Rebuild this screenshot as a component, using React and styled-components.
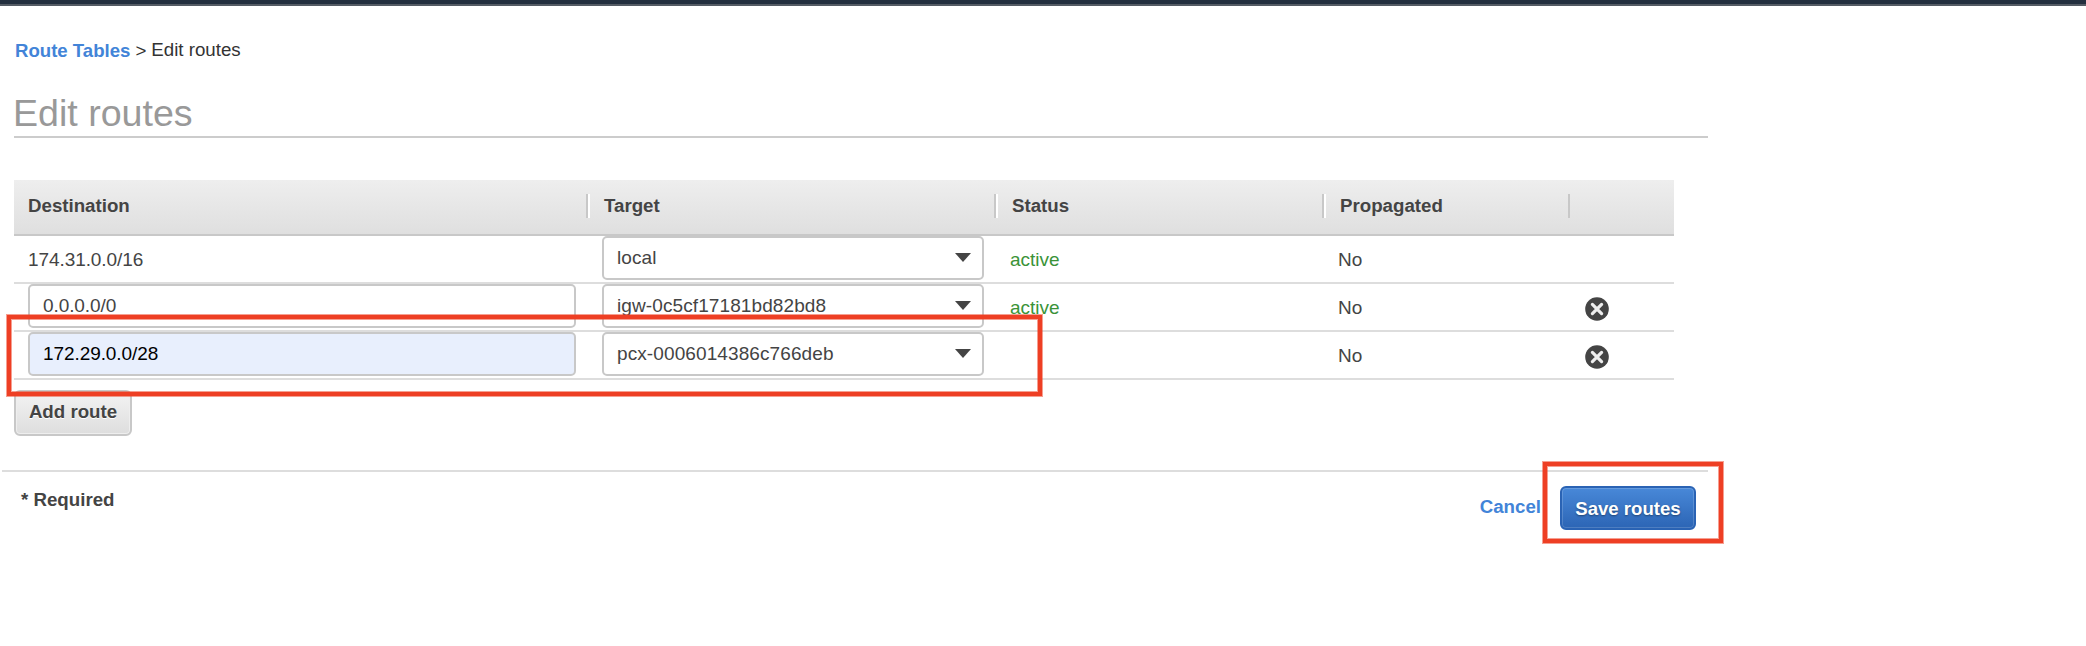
import React from "react";
import styled, { createGlobalStyle } from "styled-components";

const GlobalStyle = createGlobalStyle`
  *, *::before, *::after { box-sizing: border-box; }
  body {
    margin: 0;
    background: #fff;
    color: #444;
    font-family: "Liberation Sans", Arial, Helvetica, sans-serif;
    font-size: 19px;
    line-height: 23px;
  }
`;

const Page = styled.div`
  position: relative;
  min-height: 646px;
  overflow: hidden;
`;

const TopBar = styled.div`
  height: 6px;
  background: #232f3e;
  border-bottom: 2px solid #545b64;
`;

const Main = styled.main`
  width: 1708px;
  padding: 32px 0 0 14px;
`;

const Breadcrumb = styled.nav`
  display: flex;
  height: 24px;
  color: #333;
  font-size: 18.7px;
`;

const BreadcrumbLink = styled.a`
  margin: 1px 5px 0 1px;
  color: #4284d8;
  font-size: 18.6px;
  font-weight: bold;
`;

const Separator = styled.span`
  margin: 1px 5px 0 0;
`;

const Title = styled.h1`
  height: 50px;
  margin: 26px 0 0 0;
  padding-top: 3px;
  border-bottom: 2px solid #ccc;
  color: #999;
  font-size: 37.6px;
  font-weight: normal;
  line-height: 44px;
  text-indent: -1px;
`;

const Table = styled.div`
  width: 1660px;
  margin-top: 42px;
`;

const columns = "572px 408px 328px 246px 106px";

const HeaderRow = styled.div`
  display: grid;
  grid-template-columns: ${columns};
  height: 56px;
  padding-top: 14px;
  background: linear-gradient(#eee, #dfdfdf);
  border-bottom: 2px solid #c8c8c8;
`;

const HeaderCell = styled.div`
  height: 24px;
  padding-left: ${(p) => (p.$first ? "14px" : "16px")};
  border-left: ${(p) => (p.$first ? "0" : "2px solid #c8c8c8")};
  box-shadow: ${(p) => (p.$shine ? "inset 2px 0 0 #fff" : "none")};
  font-size: 18.7px;
  font-weight: bold;
`;

const Row = styled.div`
  display: grid;
  grid-template-columns: ${columns};
  height: 48px;
  border-bottom: 2px solid #ddd;
`;

const Cell = styled.div`
  padding: ${(p) => (p.$control ? "0 10px 0 14px" : "12px 0 0 14px")};
  color: ${(p) => (p.$active ? "#3a9338" : "inherit")};
  letter-spacing: -0.08px;
`;

const TargetCell = styled.div`
  padding: 0 10px 0 16px;
  letter-spacing: 0.1px;
`;

const PropagatedCell = styled(Cell)`
  padding-left: 16px;
`;

const StatusCell = styled(Cell)`
  padding-left: 16px;
  letter-spacing: 0;
`;

const ActionCell = styled.div`
  padding: 13px 0 0 17px;
`;

const Field = styled.div`
  display: flex;
  justify-content: space-between;
  height: 44px;
  padding: 8px 11px 0 13px;
  border: 2px solid #c8c8c8;
  border-radius: 5px;
  background: ${(p) => (p.$filled ? "#e8effd" : "#fff")};
  color: ${(p) => (p.$filled ? "#000" : "#444")};
`;

const Caret = styled.span`
  width: 16px;
  height: 9px;
  margin-top: 7px;
  background: #444;
  clip-path: polygon(0 0, 100% 0, 50% 100%);
`;

const RemoveIcon = styled.svg`
  display: block;
  width: 24px;
  height: 24px;
`;

const AddButton = styled.button`
  display: block;
  width: 118px;
  height: 46px;
  margin-top: 10px;
  padding: 0 0 3px;
  border: 2px solid #c8c8c8;
  border-radius: 6px;
  background: linear-gradient(#f3f3f3, #dedede);
  box-shadow: inset 0 0 0 1px #eee;
  color: #444;
  font: bold 18.7px/23px "Liberation Sans", Arial, sans-serif;
  text-shadow: 0 1px 0 #fff;
`;

const Footer = styled.footer`
  display: flex;
  justify-content: space-between;
  margin: 34px 0 0 -12px;
  padding: 14px 12px 0 19px;
  border-top: 2px solid #ddd;
`;

const Required = styled.div`
  padding-top: 2px;
  font-size: 18.7px;
  font-weight: bold;
`;

const Actions = styled.div`
  display: flex;
  gap: 19px;
`;

const CancelLink = styled.a`
  padding-top: 9px;
  color: #4284d8;
  font-size: 18.7px;
  font-weight: bold;
`;

const SaveButton = styled.button`
  width: 136px;
  height: 44px;
  padding: 0;
  border: 2px solid #2a63b4;
  border-radius: 6px;
  background: linear-gradient(#4888d8, #2c65b5);
  box-shadow: inset 0 0 0 1px rgba(255, 255, 255, 0.16);
  color: #fff;
  font: bold 18.6px/23px "Liberation Sans", Arial, sans-serif;
  text-shadow: 0 1px 2px rgba(0, 0, 0, 0.4);
`;

const Highlight = styled.div`
  position: absolute;
  border: 4px solid #ee3f24;
  box-shadow: 0 0 0 1px rgba(238, 63, 36, 0.5), inset 0 0 0 1px rgba(238, 63, 36, 0.5);
  pointer-events: none;
`;

const RouteHighlight = styled(Highlight)`
  left: 7px;
  top: 315px;
  width: 1035px;
  height: 81px;
`;

const SaveHighlight = styled(Highlight)`
  left: 1543px;
  top: 462px;
  width: 180px;
  height: 81px;
`;

const routes = [
  { destination: "174.31.0.0/16", target: "local", status: "active", fixed: true },
  { destination: "0.0.0.0/0", target: "igw-0c5cf17181bd82bd8", status: "active" },
  { destination: "172.29.0.0/28", target: "pcx-0006014386c766deb", status: "", filled: true },
];

function Remove() {
  return (
    <RemoveIcon viewBox="0 0 24 24" role="img" aria-label="Remove route">
      <circle cx="12" cy="12" r="11.8" fill="#444" />
      <path d="M7.4 7.4L16.6 16.6M16.6 7.4L7.4 16.6" stroke="#eee" strokeWidth="3.2" strokeLinecap="round" />
    </RemoveIcon>
  );
}

function RouteRow({ route }) {
  return (
    <Row>
      <Cell $control={!route.fixed}>
        {route.fixed ? route.destination : <Field $filled={route.filled}>{route.destination}</Field>}
      </Cell>
      <TargetCell>
        <Field>
          {route.target}
          <Caret />
        </Field>
      </TargetCell>
      <StatusCell $active>{route.status}</StatusCell>
      <PropagatedCell>No</PropagatedCell>
      <ActionCell>{!route.fixed && <Remove />}</ActionCell>
    </Row>
  );
}

export default function App() {
  return (
    <Page>
      <GlobalStyle />
      <TopBar />
      <Main>
        <Breadcrumb>
          <BreadcrumbLink>Route Tables</BreadcrumbLink>
          <Separator>&gt;</Separator>
          <span>Edit routes</span>
        </Breadcrumb>
        <Title>Edit routes</Title>
        <Table>
          <HeaderRow>
            <HeaderCell $first>Destination</HeaderCell>
            <HeaderCell $shine>Target</HeaderCell>
            <HeaderCell $shine>Status</HeaderCell>
            <HeaderCell $shine>Propagated</HeaderCell>
            <HeaderCell />
          </HeaderRow>
          {routes.map((route) => (
            <RouteRow key={route.destination} route={route} />
          ))}
        </Table>
        <AddButton>Add route</AddButton>
        <Footer>
          <Required>* Required</Required>
          <Actions>
            <CancelLink>Cancel</CancelLink>
            <SaveButton>Save routes</SaveButton>
          </Actions>
        </Footer>
      </Main>
      <RouteHighlight />
      <SaveHighlight />
    </Page>
  );
}
